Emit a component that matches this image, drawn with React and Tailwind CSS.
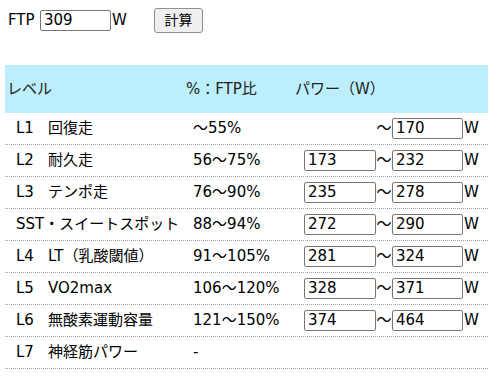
import React from 'react';

const rows = [
  { level: 'L1', name: '回復走', pct: '～55%', from: null, to: 170 },
  { level: 'L2', name: '耐久走', pct: '56～75%', from: 173, to: 232 },
  { level: 'L3', name: 'テンポ走', pct: '76～90%', from: 235, to: 278 },
  { level: 'SST', name: '・スイートスポット', pct: '88～94%', from: 272, to: 290, joined: true },
  { level: 'L4', name: 'LT（乳酸閾値）', pct: '91～105%', from: 281, to: 324 },
  { level: 'L5', name: 'VO2max', pct: '106～120%', from: 328, to: 371 },
  { level: 'L6', name: '無酸素運動容量', pct: '121～150%', from: 374, to: 464 },
  { level: 'L7', name: '神経筋パワー', pct: '-', from: null, to: null, empty: true },
];

const font = { fontFamily: '"DejaVu Sans", "Noto Sans CJK JP", sans-serif' };

const Box = ({ value, hidden, w = 'w-[72px]' }) => (
  <input
    readOnly
    value={value ?? ''}
    className={`${w} h-[21px] rounded-[2px] border border-[#767676] bg-white pl-[3px] text-[15px] text-black outline-none ${hidden ? 'invisible' : ''}`}
  />
);

const App = () => {
  return (
    <div className="min-h-screen bg-white px-[5px] text-[15px] text-black" style={font}>
      <div className="flex items-center pl-[3px] pt-[8px]">
        <span className="w-[32px]">FTP</span>
        <Box value="309" w="w-[71px]" />
        <span className="w-[43px] pl-[1px]">W</span>
        <button className="h-[25px] w-[49px] rounded-[3px] border border-[#8f8f8f] bg-[#efefef] text-[14px] text-black">
          計算
        </button>
      </div>

      <div className="mt-[32px] w-[483px]">
        <div className="grid h-[48px] grid-cols-[179px_109px_195px] items-center bg-[#bdeefb] px-[2px] text-[#222]">
          <span>レベル</span>
          <span>%：FTP比</span>
          <span>パワー（W）</span>
        </div>

        {rows.map((r) => (
          <div
            key={r.level}
            className="grid h-[32px] grid-cols-[179px_109px_195px] items-center border-b border-dotted border-[#a0a0a0]"
          >
            <span className="pl-[11px] whitespace-nowrap">
              {r.joined ? (
                <>
                  {r.level}
                  {r.name}
                </>
              ) : (
                <>
                  <span className="inline-block w-[32px]">{r.level}</span>
                  {r.name}
                </>
              )}
            </span>
            <span className="pl-[9px]">{r.pct}</span>
            {r.empty ? (
              <span />
            ) : (
              <div className="flex items-center pl-[11px]">
                <Box value={r.from} hidden={r.from === null} />
                <span className="w-[16px] text-center">～</span>
                <Box value={r.to} w="w-[71px]" />
                <span className="pl-[1px]">W</span>
              </div>
            )}
          </div>
        ))}
      </div>
    </div>
  );
};

export default App;
